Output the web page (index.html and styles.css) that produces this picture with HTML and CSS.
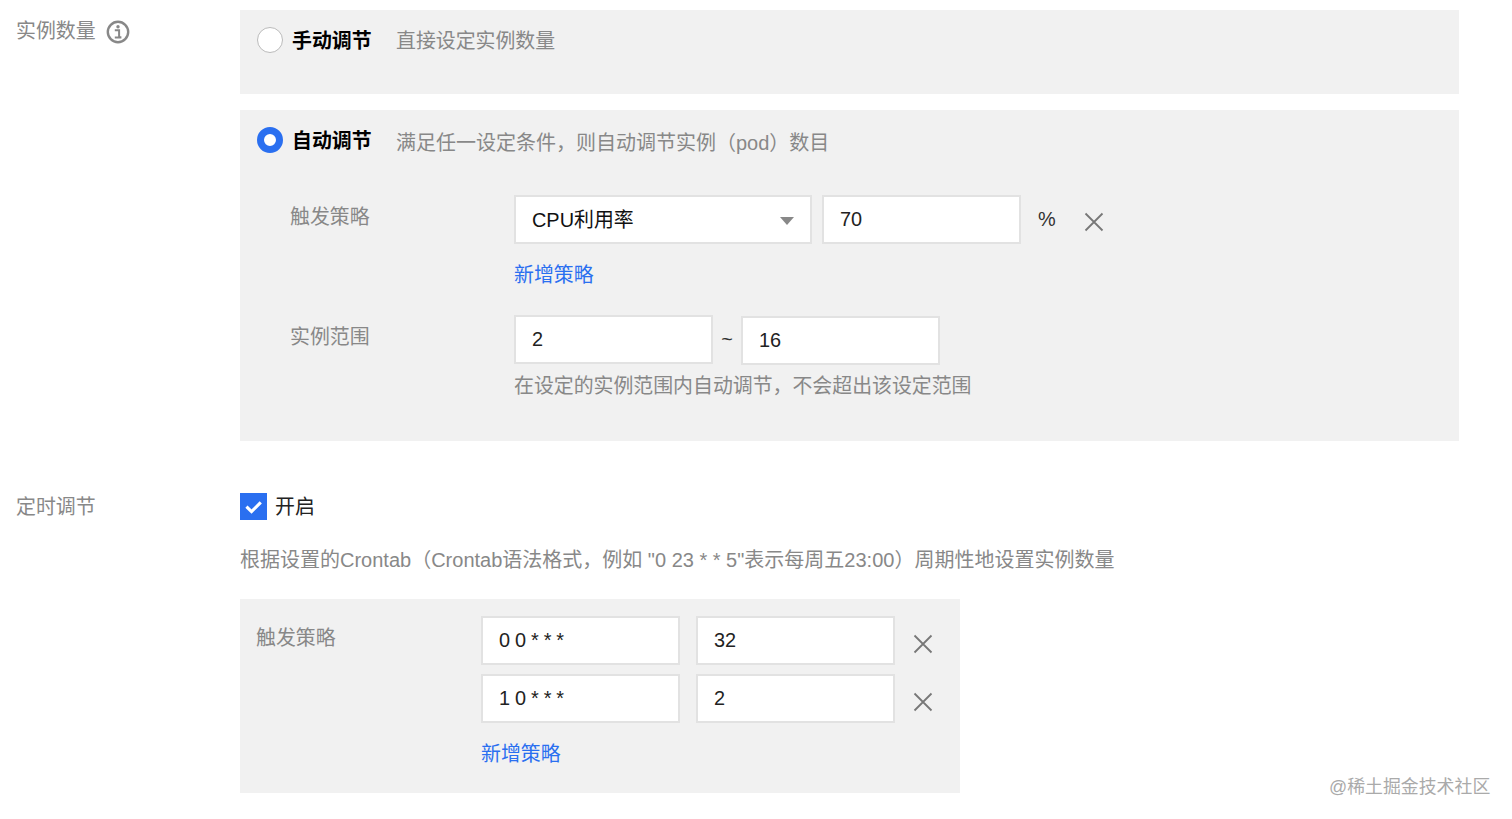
FILE: index.html
```html
<!DOCTYPE html>
<html lang="zh-CN">
<head>
<meta charset="utf-8">
<title>实例数量</title>
<link rel="stylesheet" href="styles.css">
</head>
<body>
<main class="page">
  <section class="section scale-section">
    <div class="section-label">
      <span>实例数量</span>
      <svg class="info-icon" viewBox="0 0 24 24" aria-hidden="true"><circle cx="12" cy="12" r="10.2" fill="none" stroke="#888" stroke-width="2.4"/><circle cx="12" cy="6.8" r="1.7" fill="#888"/><path d="M8.8 10.2h4.3v7h2.2M8.8 17.4h6.6" fill="none" stroke="#888" stroke-width="2"/></svg>
    </div>
    <div class="section-body">
      <div class="panel panel-manual">
        <div class="mode-row">
          <span class="radio"></span>
          <strong class="mode-name">手动调节</strong>
          <span class="muted">直接设定实例数量</span>
        </div>
      </div>
      <div class="panel panel-auto">
        <div class="mode-row">
          <span class="radio radio-on"></span>
          <strong class="mode-name">自动调节</strong>
          <span class="muted">满足任一设定条件，则自动调节实例（pod）数目</span>
        </div>
        <div class="form-row trigger-row">
          <div class="field-label">触发策略</div>
          <div class="field-body">
            <div class="controls">
              <div class="box select"><span class="select-text">CPU利用率</span><span class="caret"></span></div>
              <div class="box number">70</div>
              <span class="unit">%</span>
              <svg class="close close-auto" viewBox="0 0 20 20" aria-hidden="true"><path d="M1.5 1.5l17 17M18.5 1.5l-17 17"/></svg>
            </div>
            <a class="link link-auto">新增策略</a>
          </div>
        </div>
        <div class="form-row range-row">
          <div class="field-label">实例范围</div>
          <div class="field-body">
            <div class="controls">
              <div class="box number">2</div>
              <span class="tilde">~</span>
              <div class="box number range-max">16</div>
            </div>
            <p class="muted hint">在设定的实例范围内自动调节，不会超出该设定范围</p>
          </div>
        </div>
      </div>
    </div>
  </section>

  <section class="section schedule-section">
    <div class="section-label schedule-label">定时调节</div>
    <div class="section-body">
      <div class="check-row">
        <span class="checkbox"><svg viewBox="0 0 26 26" aria-hidden="true"><path d="M6.2 13.2l4.9 4.7 8.9-8.9" fill="none" stroke="#fff" stroke-width="3"/></svg></span>
        <span class="check-text">开启</span>
      </div>
      <p class="muted schedule-desc">根据设置的Crontab（Crontab语法格式，例如 "0 23 * * 5"表示每周五23:00）周期性地设置实例数量</p>
      <div class="panel panel-schedule">
        <div class="schedule-label-cell field-label">触发策略</div>
        <div class="schedule-fields">
          <div class="controls schedule-line">
            <div class="box number cron">0 0 * * *</div>
            <div class="box number">32</div>
            <svg class="close" viewBox="0 0 20 20" aria-hidden="true"><path d="M1.5 1.5l17 17M18.5 1.5l-17 17"/></svg>
          </div>
          <div class="controls schedule-line">
            <div class="box number cron">1 0 * * *</div>
            <div class="box number">2</div>
            <svg class="close" viewBox="0 0 20 20" aria-hidden="true"><path d="M1.5 1.5l17 17M18.5 1.5l-17 17"/></svg>
          </div>
          <a class="link link-schedule">新增策略</a>
        </div>
      </div>
    </div>
  </section>
</main>
<div class="watermark">@稀土掘金技术社区</div>
</body>
</html>
```
FILE: styles.css
```css
* { box-sizing: border-box; }
html, body { margin: 0; height: 100%; overflow: hidden; background: #fff; }
body {
  font-family: "Liberation Sans", "Noto Sans CJK SC", sans-serif;
  font-size: 19.9px;
  line-height: 28px;
  color: #000;
}
.page { padding: 10px 53px 0 0; }
.section { display: grid; grid-template-columns: 240px 1fr; }
.schedule-section { margin-top: 47px; }
.section-label {
  padding: 7px 0 0 16px;
  color: #888;
  display: flex;
  align-items: flex-start;
  gap: 10px;
}
.schedule-label { padding-top: 5px; }
.info-icon { width: 24px; height: 24px; margin-top: 3px; }
.panel { background: #f1f1f1; }
.panel-manual { height: 84px; padding: 16px 17px 0; }
.panel-auto { height: 331px; margin-top: 16px; padding: 16px 17px 0; }
.mode-row { display: flex; align-items: center; height: 28px; }
.mode-row .mode-name, .mode-row .muted { position: relative; top: 1px; }
.panel-auto .mode-row .muted { top: 3px; font-size: 20px; }
.radio {
  width: 26px; height: 26px; border-radius: 50%;
  background: #fff; border: 1px solid #bbb; flex: none;
}
.radio-on { border: 7px solid #2a6ff0; }
.mode-name { margin-left: 9px; width: 104px; }
.muted { color: #888; margin: 0; }
.form-row { display: grid; grid-template-columns: 224px 1fr; padding-left: 33px; }
.trigger-row { margin-top: 41px; }
.range-row { margin-top: 26px; }
.field-label { color: #888; padding-top: 8px; }
.controls { display: flex; align-items: flex-start; }
.box {
  height: 49px; width: 199px; background: #fff;
  border: 2px solid #e2e2e2; padding: 0 16px;
  display: flex; align-items: center; color: #222; line-height: 1;
}
.cron { letter-spacing: -0.3px; }
.select { width: 298px; position: relative; margin-right: 10px; color: #111; }
.select-text { padding-top: 3px; }
.caret {
  position: absolute; right: 16px; top: 20px;
  border-left: 7px solid transparent; border-right: 7px solid transparent;
  border-top: 8px solid #888;
}
.unit { margin-left: 17px; line-height: 49px; color: #333; }
.close { width: 20px; height: 20px; flex: none; stroke: #777; stroke-width: 1.8; fill: none; }
.close-auto { margin: 17px 0 0 28px; }
.link { display: block; color: #2a6ff0; }
.link-auto { margin-top: 17px; }
.tilde { width: 28px; text-align: center; line-height: 49px; color: #333; }
.range-max { margin-top: 1px; }
.hint { margin-top: 7px; }
.check-row { display: flex; align-items: center; height: 27px; margin-top: 5px; }
.checkbox { width: 27px; height: 27px; background: #2a6ff0; display: block; flex: none; }
.checkbox svg { display: block; width: 27px; height: 27px; }
.check-text { margin-left: 8px; color: #222; }
.schedule-desc { margin-top: 26px; font-size: 20px; }
.panel-schedule {
  margin-top: 25px; width: 720px; height: 194px;
  padding: 17px 0 0 16px;
  display: grid; grid-template-columns: 225px 1fr;
}
.schedule-label-cell { padding-top: 8px; }
.schedule-line { margin-bottom: 9px; gap: 16px; }
.schedule-line .close { margin: 18px 0 0 2px; }
.link-schedule { margin-top: 17px; }
.watermark {
  position: absolute; left: 1329px; top: 773px;
  font-size: 17.9px; color: #aaa;
}
```
